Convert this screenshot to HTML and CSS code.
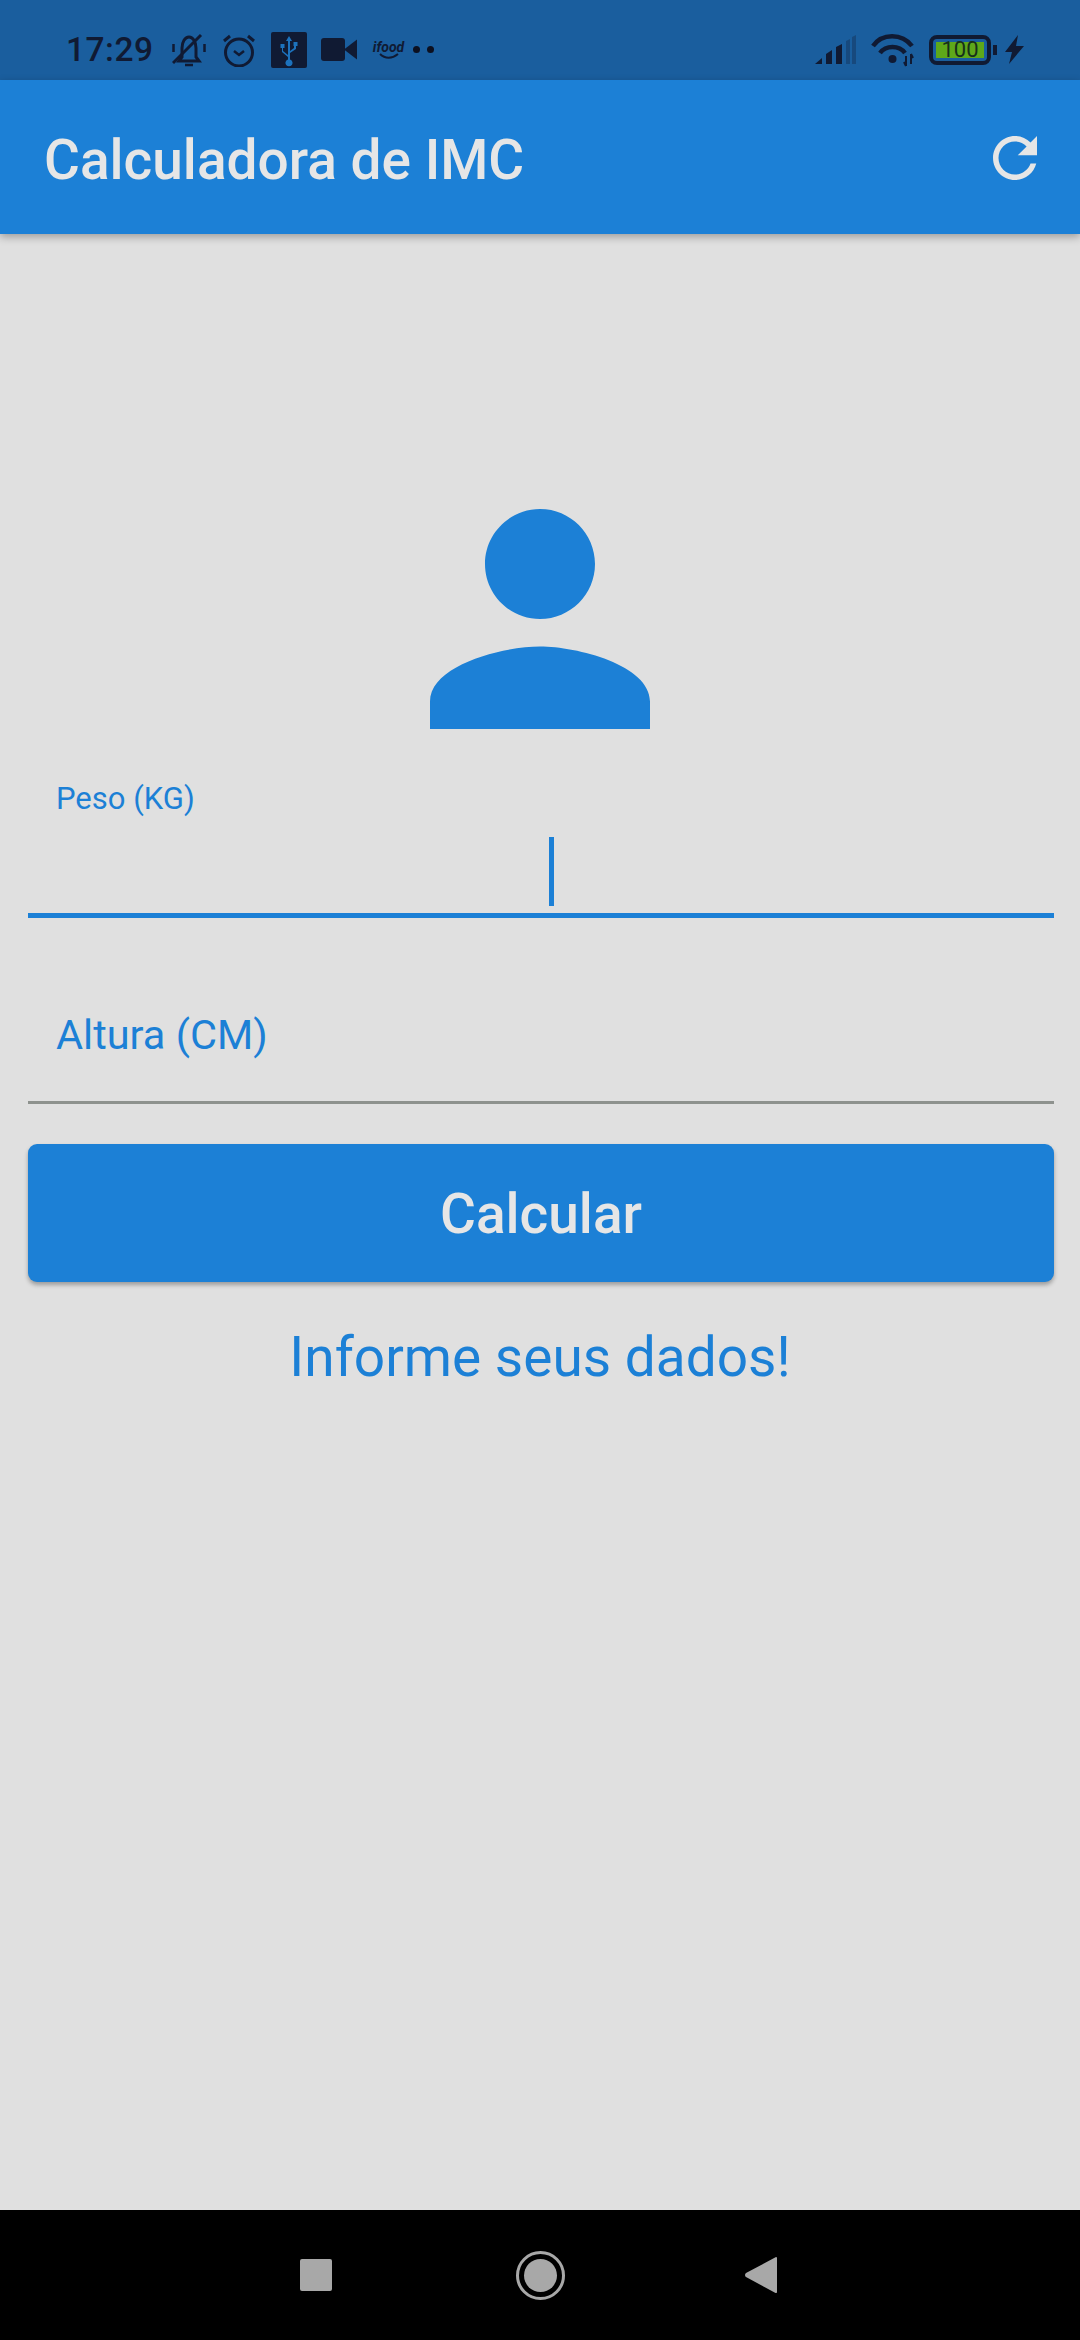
FILE: index.html
```html
<!DOCTYPE html>
<html lang="pt">
<head>
  <meta charset="UTF-8" />
  <meta name="viewport" content="width=device-width, initial-scale=1.0" />
  <title>Calculadora de IMC</title>
  <link rel="stylesheet" href="styles.css">
</head>
<body>
  <div class="status-bar">
    <span class="clock">17:29</span>
    <svg class="st-bell" width="34" height="34" viewBox="0 0 34 34" fill="none" stroke="#101a33" stroke-width="3">
      <path d="M7 28h20l-3-4v-9c0-6-3-11-7-11s-7 5-7 11v9z"/>
      <path d="M13 32h8" stroke-width="2.500"/>
      <path d="M1 30L29 2" stroke-width="3"/>
      <path d="M1.500 11v8M32.500 11v8" stroke-width="2.500"/>
    </svg>
    <svg class="st-alarm" width="34" height="34" viewBox="0 0 34 34" fill="none" stroke="#101a33" stroke-width="3">
      <circle cx="17" cy="19.500" r="13.500"/>
      <path d="M12 18l5 4 5-4" stroke-width="2.500"/>
      <path d="M2 8l6-5M32 8l-6-5"/>
    </svg>
    <svg class="st-usb" width="36" height="36" viewBox="0 0 36 36">
      <rect width="36" height="36" rx="2" fill="#101a33"/>
      <path d="M18 4l-3 5h2v14l-5-4v-3h1.500v-4h-4v4H11v4l6 5v2.500a3.500 3.500 0 1 0 2 0V21l6-4v-3h1.500v-4h-4v4H23v2l-4 3V9h2z" fill="#1c72bd"/>
    </svg>
    <svg class="st-camera" width="36" height="23" viewBox="0 0 36 23" fill="#101a33">
      <rect width="24" height="23" rx="3"/>
      <path d="M23 11.500l13-10v20z"/>
    </svg>
    <div class="st-ifood">
      <span class="ifood-text">ifood</span>
      <svg class="ifood-smile" width="20" height="6" viewBox="0 0 20 6" fill="none" stroke="#101a33" stroke-width="2">
        <path d="M1 1c5 5 12 5 18 0"/>
      </svg>
    </div>
    <span class="st-dot"></span>
    <span class="st-dot"></span>
    <span class="status-spacer"></span>
    <svg class="st-signal" width="41" height="29" viewBox="0 0 41 29" fill="#101a33">
      <path d="M0 29l7-6v6z"/>
      <path d="M11 29V19l6-4v14z"/>
      <path d="M21 29V12l6-3v20z"/>
      <path d="M31 29V6l4-2v25zM37 29V2l4-2v29z" opacity="0.3"/>
    </svg>
    <svg class="st-wifi" width="44" height="33" viewBox="0 0 44 33" fill="none" stroke="#101a33" stroke-width="4.500">
      <path d="M2 12C11 -1 31 -1 41 12"/>
      <path d="M9 19c6-8 19-8 25 0"/>
      <circle cx="21.500" cy="25" r="4" fill="#101a33" stroke="none"/>
      <path d="M35 22v10M40 20v10M33 28l2 4M42 24l-2-4" stroke-width="2"/>
    </svg>
    <div class="battery">
      <div class="battery-body"><span class="battery-level">100</span></div>
      <span class="battery-nub"></span>
    </div>
    <svg class="st-bolt" width="19" height="29" viewBox="0 0 19 29" fill="#101a33">
      <path d="M13 0L0 17h7L4 29l15-18h-8z"/>
    </svg>
  </div>

  <header class="app-bar">
    <h1 class="app-title">Calculadora de IMC</h1>
    <svg class="refresh" width="66" height="66" viewBox="0 0 24 24" fill="#e6e6e6">
      <path d="M17.65 6.35C16.2 4.9 14.21 4 12 4c-4.42 0-7.99 3.58-7.99 8s3.57 8 7.99 8c3.73 0 6.84-2.55 7.73-6h-2.08c-.82 2.33-3.04 4-5.65 4-3.31 0-6-2.69-6-6s2.69-6 6-6c1.66 0 3.14.69 4.22 1.78L13 11h7V4l-2.350 2.350z"/>
    </svg>
  </header>

  <main class="content">
    <svg class="avatar" width="330" height="330" viewBox="0 0 24 24" fill="#1c80d6">
      <path d="M12 12c2.210 0 4-1.790 4-4s-1.790-4-4-4-4 1.790-4 4 1.790 4 4 4zm0 2c-2.670 0-8 1.340-8 4v2h16v-2c0-2.660-5.330-4-8-4z"/>
    </svg>

    <div class="field field-active">
      <label class="field-label-small">Peso (KG)</label>
      <div class="field-value"><span class="caret"></span></div>
    </div>

    <div class="field field-idle">
      <label class="field-label">Altura (CM)</label>
    </div>

    <button class="calc-button">Calcular</button>

    <p class="result">Informe seus dados!</p>
  </main>

  <nav class="nav-bar">
    <span class="nav-square"></span>
    <span class="nav-home"><span class="nav-home-inner"></span></span>
    <svg class="nav-back" width="32" height="36" viewBox="0 0 32 36" fill="#a8a8a8">
      <path d="M31 0a1 1 0 0 1 1 1v34a1 1 0 0 1-1.500 1L1 20a2.500 2.500 0 0 1 0-4z"/>
    </svg>
  </nav>
</body>
</html>
```

FILE: styles.css
```css
* {
  box-sizing: border-box;
}
body {
  margin: 0;
  width: 1080px;
  height: 2340px;
  display: flex;
  flex-direction: column;
  background-color: #e0e0e0;
  font-family: Roboto, "Liberation Sans", sans-serif;
  overflow: hidden;
}

/* status bar */
.status-bar {
  height: 80px;
  flex: none;
  display: flex;
  align-items: center;
  padding: 19px 56px 0 66px;
  background-color: #1a5e9e;
  color: #101a33;
}
.clock {
  font-size: 33.5px;
  font-weight: 500;
  letter-spacing: 0.5px;
  margin-right: 18px;
}
.st-alarm {
  margin-left: 16px;
}
.st-usb {
  margin-left: 15px;
}
.st-camera {
  margin-left: 14px;
}
.st-ifood {
  margin-left: 16px;
  width: 32px;
  display: flex;
  flex-direction: column;
  align-items: center;
}
.ifood-text {
  font-size: 14px;
  line-height: 13px;
  font-weight: 700;
  font-style: italic;
}
.ifood-smile {
  margin-top: -1px;
}
.st-dot {
  width: 7px;
  height: 7px;
  margin-left: 7px;
  border-radius: 50%;
  background-color: #0c1020;
}
.st-ifood + .st-dot {
  margin-left: 8px;
}
.status-spacer {
  flex: 1;
}
.st-wifi {
  margin-left: 15px;
  margin-top: 2px;
}
.battery {
  display: flex;
  align-items: center;
  margin-left: 14px;
}
.battery-body {
  width: 62px;
  height: 30px;
  padding: 3px;
  border: 4px solid #101a33;
  border-radius: 8px;
  display: flex;
}
.battery-level {
  flex: 1;
  background-color: #5ea81a;
  color: #16301a;
  font-size: 22px;
  line-height: 16px;
  text-align: center;
}
.battery-nub {
  width: 4px;
  height: 10px;
  margin-left: 2px;
  background-color: #101a33;
}
.st-bolt {
  margin-left: 8px;
}

/* app bar */
.app-bar {
  height: 154px;
  flex: none;
  display: flex;
  align-items: center;
  justify-content: space-between;
  padding: 0 32px 0 44px;
  background-color: #1c80d6;
  box-shadow: 0 3px 8px rgba(0, 0, 0, 0.3);
  position: relative;
}
.app-title {
  margin: 5px 0 0;
  font-size: 55px;
  font-weight: 500;
  color: #e6e6e6;
}
.refresh {
  margin-top: 2px;
}

/* form */
.content {
  flex: 1;
  display: flex;
  flex-direction: column;
  padding: 220px 26px 0 28px;
}
.avatar {
  display: block;
  align-self: center;
  flex: none;
  margin-right: 2px;
}
.field {
  padding-left: 28px;
  color: #1c80d6;
}
.field-active {
  height: 134px;
  border-bottom: 5px solid #1c80d6;
}
.field-label-small {
  display: block;
  height: 53px;
  font-size: 31px;
  line-height: 30px;
}
.field-value {
  display: flex;
  justify-content: center;
  padding-right: 8px;
}
.caret {
  width: 5px;
  height: 69px;
  background-color: #1c80d6;
}
.field-idle {
  height: 186px;
  padding-top: 92px;
  border-bottom: 3px solid #8e928e;
}
.field-label {
  display: block;
  font-size: 41.5px;
  line-height: 50px;
}
.calc-button {
  height: 138px;
  flex: none;
  margin-top: 40px;
  padding-top: 3px;
  border: 0;
  border-radius: 9px;
  background-color: #1c80d6;
  box-shadow: 0 3px 4px rgba(0, 0, 0, 0.3);
  color: #e6e6e6;
  font-family: inherit;
  font-size: 55px;
  font-weight: 500;
}
.result {
  margin: 40px 2px 0 0;
  text-align: center;
  font-size: 55px;
  line-height: 70px;
  color: #1c80d6;
}

/* nav bar */
.nav-bar {
  height: 130px;
  flex: none;
  display: flex;
  align-items: center;
  background-color: #000;
  padding-left: 300px;
}
.nav-square {
  width: 32px;
  height: 32px;
  border-radius: 2px;
  background-color: #a8a8a8;
}
.nav-home {
  width: 49px;
  height: 49px;
  margin-left: 184px;
  padding: 5px;
  border: 3px solid #a8a8a8;
  border-radius: 50%;
}
.nav-home-inner {
  display: block;
  width: 33px;
  height: 33px;
  border-radius: 50%;
  background-color: #a8a8a8;
}
.nav-back {
  margin-left: 180px;
}
```
